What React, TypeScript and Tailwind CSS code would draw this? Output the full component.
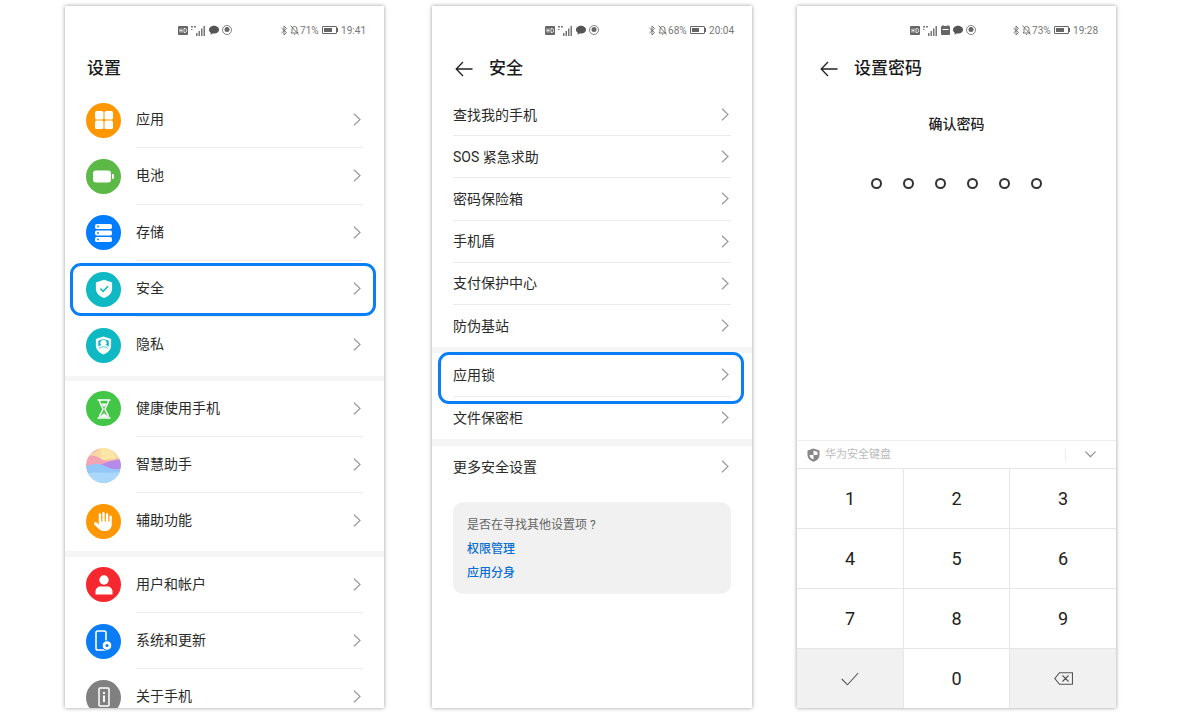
import React from 'react';
import { FaHand } from 'react-icons/fa6';

const Chevron: React.FC = () => (
  <svg width="8" height="13" viewBox="0 0 8 13" fill="none" stroke="#9a9a9a" strokeWidth="1.2">
    <path d="M1 0.8l6 5.7-6 5.7" />
  </svg>
);

const BackArrow: React.FC = () => (
  <svg width="18" height="16" viewBox="0 0 18 16" fill="none" stroke="#222" strokeWidth="1.3">
    <path d="M17.5 8H1.2M8 1L1.2 8 8 15" />
  </svg>
);

const StatusBar: React.FC<{ battery: string; time: string; calendar?: boolean; fill: number }> = ({
  battery,
  time,
  calendar,
  fill,
}) => (
  <div className="h-[48px] flex items-center justify-between pl-[113px] pr-[18px] shrink-0 text-[10px] text-[#777]">
    <div className="flex items-center gap-[3px]">
      <svg width="10" height="9" viewBox="0 0 10 9">
        <rect width="10" height="9" rx="1" fill="#666" />
        <path d="M2 2.5v4M4 2.5v4M2 4.5h2M6 2.5v4h1.2a1.4 2 0 000-4z" stroke="#fff" strokeWidth="0.8" fill="none" />
      </svg>
      <svg width="15" height="11" viewBox="0 0 15 11" fill="#777">
        <rect x="0" y="1" width="2" height="1.5" />
        <rect x="3" y="1" width="2" height="1.5" />
        <rect x="0" y="4" width="1.5" height="1" />
        <rect x="5" y="8" width="1.5" height="3" />
        <rect x="7.5" y="6" width="1.5" height="5" />
        <rect x="10" y="3.5" width="1.5" height="7.5" />
        <rect x="12.5" y="1" width="1.5" height="10" />
      </svg>
      {calendar && (
        <svg width="9" height="10" viewBox="0 0 9 10">
          <rect y="1" width="9" height="9" rx="1" fill="#666" />
          <rect x="1.5" y="4" width="6" height="1" fill="#fff" />
          <rect x="1.5" y="0" width="1" height="2" fill="#666" />
          <rect x="6.5" y="0" width="1" height="2" fill="#666" />
        </svg>
      )}
      <svg width="10" height="10" viewBox="0 0 10 10" fill="#555">
        <path d="M5 .8c2.700 0 5 1.700 5 3.900 0 2.200-2.300 3.900-5 3.900-.5 0-1-.1-1.400-.2L1.500 9.800l.3-2.100C.7 7 0 5.900 0 4.700 0 2.500 2.300.8 5 .8z" />
      </svg>
      <svg width="10" height="10" viewBox="0 0 10 10">
        <circle cx="5" cy="5" r="4.500" fill="none" stroke="#666" strokeWidth="0.8" />
        <circle cx="5" cy="4.500" r="2.500" fill="#666" />
      </svg>
    </div>
    <div className="flex items-center">
      <svg width="6" height="11" viewBox="0 0 6 11" fill="none" stroke="#666" strokeWidth="0.9">
        <path d="M.5 3l5 4.500L3 10V1l2.500 2.500-5 4.500" />
      </svg>
      <svg className="ml-[3px]" width="9" height="10" viewBox="0 0 9 10" fill="none" stroke="#666" strokeWidth="0.9">
        <path d="M1 8h7L7 6.500V4a2.500 2.500 0 00-5 0v2.500zM4 9.500h1M.5.500l8 9" />
      </svg>
      <span className="ml-[1px]">{battery}</span>
      <div className="ml-[3px] flex items-center">
        <div className="w-[15px] h-[8px] rounded-[1px] border border-[#666] p-[1px]">
          <div className="h-full bg-[#666]" style={{ width: `${fill}%` }} />
        </div>
        <div className="w-[1.5px] h-[4px] bg-[#666]" />
      </div>
      <span className="ml-[3px]">{time}</span>
    </div>
  </div>
);

const IconCircle: React.FC<{ className: string; children?: React.ReactNode }> = ({ className, children }) => (
  <div className={`w-[35px] h-[35px] rounded-full shrink-0 flex items-center justify-center ${className}`}>
    {children}
  </div>
);

const AppsIcon = () => (
  <svg width="20" height="20" viewBox="0 0 20 20" fill="#fff">
    <rect x="1" y="1" width="8.500" height="8.500" rx="1.500" />
    <rect x="10.500" y="1" width="8.500" height="8.500" rx="1.500" />
    <rect x="1" y="10.500" width="8.500" height="8.500" rx="1.500" />
    <rect x="10.500" y="10.500" width="8.500" height="8.500" rx="1.500" />
  </svg>
);

const BatteryIcon = () => (
  <svg width="21" height="13" viewBox="0 0 21 13" fill="#fff">
    <rect x="0" y="0.500" width="18" height="12" rx="3" />
    <rect x="19" y="4" width="2" height="5" rx="1" />
  </svg>
);

const StorageIcon = () => (
  <svg width="17" height="18" viewBox="0 0 17 18" fill="#fff">
    <rect y="0" width="17" height="5" rx="1.800" />
    <rect y="6.500" width="17" height="5" rx="1.800" />
    <rect y="13" width="17" height="5" rx="1.800" />
    <circle cx="3" cy="2.500" r="0.900" fill="#007dff" />
    <circle cx="3" cy="9" r="0.900" fill="#007dff" />
    <circle cx="3" cy="15.500" r="0.900" fill="#007dff" />
  </svg>
);

const ShieldCheckIcon = () => (
  <svg width="18" height="20" viewBox="0 0 20 22">
    <path d="M10 .8l9 3v7c0 5-4 8.500-9 10.200C5 19.300 1 15.800 1 10.800v-7z" fill="#fff" />
    <path d="M6 10.500l3 3 5.500-5.500" fill="none" stroke="#0fb9c4" strokeWidth="1.800" />
  </svg>
);

const ShieldUserIcon = () => (
  <svg width="19" height="21" viewBox="0 0 20 22">
    <path d="M10 1.500l8 2.700v6.800c0 4.500-3.500 7.800-8 9.500-4.500-1.700-8-5-8-9.500V4.200z" fill="#fff" />
    <path d="M10 4l5.500 1.900v5.100c0 .4 0 .8-.1 1.200-1.200-.9-2.500-1.400-3.400-1.600a3.200 3.200 0 10-4 0c-.9.2-2.200.7-3.400 1.600-.1-.4-.1-.8-.1-1.200V5.900z" fill="#0fb9c4" />
    <path d="M5.500 14c1-1 2.800-1.600 4.500-1.600s3.500.6 4.500 1.600" fill="none" stroke="#0fb9c4" strokeWidth="0.800" />
  </svg>
);

const HourglassIcon = () => (
  <svg width="14" height="20" viewBox="0 0 14 20" fill="none" stroke="#fff" strokeWidth="1.500">
    <path d="M.5 1h13M.5 19h13M2.500 1c0 4.500 3 6 3.500 9-.5 3-3.500 4.500-3.500 9M11.500 1c0 4.500-3 6-3.500 9 .5 3 3.500 4.500 3.500 9" />
    <path d="M3 18c1-2 3-2.700 4-4 1 1.300 3 2 4 4z" fill="#fff" stroke="none" />
    <path d="M4 4.500h6L7 8z" fill="#fff" stroke="none" />
  </svg>
);

const AssistantBall = () => (
  <svg width="35" height="35" viewBox="0 0 35 35" className="rounded-full">
    <rect width="35" height="35" fill="#f7d9a0" />
    <path d="M0 0h14c-3 3-8 6-14 9z" fill="#f3b6c4" />
    <path d="M14 0h12l4 12c-5-3-9-1-14 1z" fill="#fbe6a8" />
    <path d="M0 9c6-3 11-1 15 2 5 3 11 1 20-1v9H0z" fill="#f4a3b5" />
    <path d="M14 17c6-3 13-5 21-5v9c-7 2-14 0-21-4z" fill="#b58bea" />
    <path d="M0 18c7-2 13-3 19 0 6 3 11 4 16 3v14H0z" fill="#93c7f7" />
    <path d="M0 26c10-3 20 0 35-2v11H0z" fill="#a9d8fb" />
  </svg>
);

const UserIcon = () => (
  <svg width="18" height="20" viewBox="0 0 18 20" fill="#fff">
    <circle cx="9" cy="5" r="4.700" />
    <path d="M0.500 19.500v-3c0-3 2.500-5 5-5h7c2.500 0 5 2 5 5v3z" />
  </svg>
);

const PhoneGearIcon = () => (
  <svg width="17" height="22" viewBox="0 0 17 22">
    <rect x="1" y="1" width="10" height="19" rx="1.800" fill="none" stroke="#fff" strokeWidth="1.600" />
    <circle cx="12" cy="15.500" r="4.800" fill="#fff" stroke="#0a7cf5" strokeWidth="1" />
    <circle cx="12" cy="15.500" r="1.500" fill="#0a7cf5" />
  </svg>
);

const PhoneInfoIcon = () => (
  <svg width="12" height="20" viewBox="0 0 12 20">
    <rect x="1" y="1" width="10" height="18" rx="1" fill="none" stroke="#fff" strokeWidth="1.500" />
    <rect x="5" y="5" width="2" height="2" fill="#fff" />
    <rect x="5" y="8.500" width="2" height="6.500" fill="#fff" />
  </svg>
);

const IconRow: React.FC<{ label: string; icon: React.ReactNode; last?: boolean }> = ({ label, icon, last }) => (
  <div className="h-[56.33px] shrink-0 flex items-center pl-[21px]">
    {icon}
    <div
      className={`ml-[15px] mr-[21px] flex-1 h-full flex items-center justify-between pr-[2px] border-b ${
        last ? 'border-transparent' : 'border-[#ececec]'
      }`}
    >
      <span className="text-[14px] text-[#2a2a2a]">{label}</span>
      <Chevron />
    </div>
  </div>
);

const TextRow: React.FC<{ label: string; className?: string; last?: boolean }> = ({ label, className, last }) => (
  <div className={`mx-[21px] shrink-0 flex items-center justify-between pr-[2px] border-b ${className ?? 'h-[42.2px]'} ${
    last ? 'border-transparent' : 'border-[#ececec]'
  }`}>
    <span className="text-[14px] text-[#2a2a2a] pt-px">{label}</span>
    <Chevron />
  </div>
);

const GroupBreak: React.FC<{ className: string }> = ({ className }) => (
  <div className={`bg-[#f5f5f5] shrink-0 ${className}`} />
);

const Panel: React.FC<{ className: string; children: React.ReactNode }> = ({ className, children }) => (
  <div className={`relative h-[702px] bg-white overflow-hidden flex flex-col shrink-0 shadow-[0_0_4px_rgba(0,0,0,0.4)] ${className}`}>
    {children}
  </div>
);

const Highlight: React.FC<{ className: string }> = ({ className }) => (
  <div className={`absolute w-[306px] rounded-[11px] border-[3px] border-[#0a7ff5] ${className}`} />
);

const SettingsPanel: React.FC = () => (
  <Panel className="w-[319px]">
    <StatusBar battery="71%" time="19:41" fill={75} />
    <div className="h-[30px] pl-[22px] flex items-center text-[17px] font-medium text-[#1a1a1a] shrink-0">设置</div>
    <div className="mt-[8px] shrink-0">
      <IconRow label="应用" icon={<IconCircle className="bg-[#ff9800]"><AppsIcon /></IconCircle>} />
      <IconRow label="电池" icon={<IconCircle className="bg-[#5cb947]"><BatteryIcon /></IconCircle>} />
      <IconRow label="存储" icon={<IconCircle className="bg-[#007dff]"><StorageIcon /></IconCircle>} />
      <IconRow label="安全" icon={<IconCircle className="bg-[#0fb9c4]"><ShieldCheckIcon /></IconCircle>} />
      <IconRow label="隐私" icon={<IconCircle className="bg-[#0fb9c4]"><ShieldUserIcon /></IconCircle>} last />
    </div>
    <GroupBreak className="h-[5px] mt-[2px]" />
    <IconRow label="健康使用手机" icon={<IconCircle className="bg-[#43c548]"><HourglassIcon /></IconCircle>} />
    <IconRow label="智慧助手" icon={<IconCircle className="overflow-hidden"><AssistantBall /></IconCircle>} />
    <IconRow label="辅助功能" icon={<IconCircle className="bg-[#ff9800] text-white text-[19px]"><FaHand /></IconCircle>} last />
    <GroupBreak className="h-[6px] mt-[1px]" />
    <IconRow label="用户和帐户" icon={<IconCircle className="bg-[#f6282f]"><UserIcon /></IconCircle>} />
    <IconRow label="系统和更新" icon={<IconCircle className="bg-[#0a7cf5]"><PhoneGearIcon /></IconCircle>} />
    <IconRow label="关于手机" icon={<IconCircle className="bg-[#808080]"><PhoneInfoIcon /></IconCircle>} last />
    <Highlight className="left-[5px] top-[257px] h-[53px]" />
  </Panel>
);

const SecurityPanel: React.FC = () => (
  <Panel className="w-[320px]">
    <StatusBar battery="68%" time="20:04" fill={70} />
    <div className="h-[30px] pl-[23px] flex items-center shrink-0">
      <BackArrow />
      <span className="ml-[16px] text-[17px] font-medium text-[#1a1a1a]">安全</span>
    </div>
    <div className="mt-[10px] shrink-0">
      <TextRow label="查找我的手机" />
      <TextRow label="SOS 紧急求助" />
      <TextRow label="密码保险箱" />
      <TextRow label="手机盾" />
      <TextRow label="支付保护中心" />
      <TextRow label="防伪基站" last />
    </div>
    <GroupBreak className="h-[6px]" />
    <TextRow label="应用锁" className="h-[44px]" />
    <TextRow label="文件保密柜" last />
    <GroupBreak className="h-[7px]" />
    <TextRow label="更多安全设置" last />
    <div className="mx-[21px] mt-[13px] h-[92px] shrink-0 rounded-[10px] bg-[#f1f1f1] pl-[14px] pt-[14px] text-[12px]">
      <div className="text-[#666] leading-[18px]">是否在寻找其他设置项 ?</div>
      <div className="mt-[6px] text-[#0a6fd0] font-medium leading-[18px]">权限管理</div>
      <div className="mt-[6px] text-[#0a6fd0] font-medium leading-[18px]">应用分身</div>
    </div>
    <Highlight className="left-[6px] top-[346px] h-[52px]" />
  </Panel>
);

const Key: React.FC<{ className?: string; children: React.ReactNode }> = ({ className, children }) => (
  <div className={`flex items-center justify-center text-[18px] text-[#222] border-[#e6e6e6] border-t border-r last:border-r-0 ${className ?? ''}`}>
    {children}
  </div>
);

const PasswordPanel: React.FC = () => (
  <Panel className="w-[319px]">
    <StatusBar battery="73%" time="19:28" calendar fill={80} />
    <div className="h-[30px] pl-[23px] flex items-center shrink-0">
      <BackArrow />
      <span className="ml-[16px] text-[17px] font-medium text-[#1a1a1a]">设置密码</span>
    </div>
    <div className="mt-[30px] text-center text-[14px] font-medium leading-[20px] text-[#222]">确认密码</div>
    <div className="mt-[44px] flex justify-center gap-[21px]">
      {[0, 1, 2, 3, 4, 5].map((i) => (
        <div key={i} className="w-[11px] h-[11px] rounded-full border-2 border-[#333]" />
      ))}
    </div>
    <div className="mt-auto shrink-0">
      <div className="h-[28px] border-t border-[#eeeeee] flex items-center pl-[10px]">
        <svg width="13" height="14" viewBox="0 0 13 14">
          <path d="M6.500.500l6 2v4.500c0 3.300-2.700 5.700-6 6.800-3.300-1.100-6-3.500-6-6.800V2.500z" fill="#888" />
          <path d="M6.500 2.500l4 1.400V7h-4zM6.500 7h-4c0 2 1.800 3.600 4 4.500z" fill="#fff" />
        </svg>
        <span className="ml-[5px] pt-px text-[11px] text-[#bbbbbb]">华为安全键盘</span>
        <div className="ml-auto w-px h-[13px] bg-[#eeeeee]" />
        <svg className="ml-[19px] mr-[20px]" width="11" height="7" viewBox="0 0 11 7" fill="none" stroke="#888" strokeWidth="1.100">
          <path d="M.5.700l5 5 5-5" />
        </svg>
      </div>
      <div className="grid grid-cols-[107px_106px_106px] grid-rows-[60px_60px_60px_60px]">
        {['1', '2', '3', '4', '5', '6', '7', '8', '9'].map((n, i) => (
          <Key key={n} className={i % 3 === 2 ? 'border-r-0' : ''}>{n}</Key>
        ))}
        <Key className="bg-[#f1f1f1]">
          <svg width="18" height="14" viewBox="0 0 18 14" fill="none" stroke="#555" strokeWidth="1.100">
            <path d="M.8 7l5.700 5.800L17.200 1" />
          </svg>
        </Key>
        <Key>0</Key>
        <Key className="bg-[#f1f1f1] border-r-0">
          <svg width="19" height="13" viewBox="0 0 19 13" fill="none" stroke="#555" strokeWidth="1.100">
            <path d="M5.500.700h13v11.600h-13L.8 6.500zM8.500 3.500l6 6M14.500 3.500l-6 6" />
          </svg>
        </Key>
      </div>
    </div>
  </Panel>
);

const App: React.FC = () => (
  <div className="w-[1180px] h-[715px] overflow-hidden bg-white pl-[65px] pt-[6px] flex font-['Roboto','Noto_Sans_CJK_SC',sans-serif]">
    <SettingsPanel />
    <div className="w-[48px] shrink-0" />
    <SecurityPanel />
    <div className="w-[45px] shrink-0" />
    <PasswordPanel />
  </div>
);

export default App;
